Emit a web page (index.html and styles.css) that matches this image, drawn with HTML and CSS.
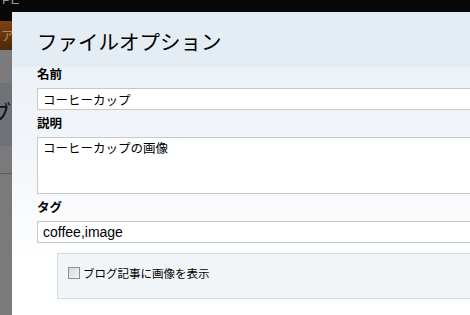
FILE: index.html
```html
<!DOCTYPE html>
<html lang="ja">
<head>
  <meta charset="UTF-8">
  <meta name="viewport" content="width=device-width, initial-scale=1.0">
  <title>ファイルオプション</title>
  <link rel="stylesheet" href="styles.css">
</head>
<body>
  <div class="page">
    <div class="topbar"><span class="logo">PE</span><span class="tweet">ツイート</span></div>
    <div class="nav"><span>ア</span></div>
    <div class="subnav"></div>
    <div class="page-title"><span>ブ</span></div>
    <div class="page-body"></div>
  </div>

  <div class="dialog">
    <div class="dialog-header">
      <h2>ファイルオプション</h2>
    </div>
    <form class="dialog-body">
      <div class="field">
        <label for="fileName">名前</label>
        <input type="text" id="fileName" class="jp" value="コーヒーカップ">
      </div>
      <div class="field">
        <label for="fileDesc">説明</label>
        <textarea id="fileDesc" class="jp">コーヒーカップの画像</textarea>
      </div>
      <div class="field">
        <label for="fileTags">タグ</label>
        <input type="text" id="fileTags" value="coffee,image">
      </div>
      <div class="option-box">
        <label class="check"><span class="box"></span>ブログ記事に画像を表示</label>
      </div>
    </form>
  </div>
</body>
</html>
```

FILE: styles.css
```css
body {
  margin: 0;
  width: 470px;
  height: 315px;
  overflow: hidden;
  position: relative;
  font-family: "Liberation Sans", "Noto Sans CJK JP", sans-serif;
  background-color: #7a7a7a;
}

/* page behind the dialog */
.topbar {
  height: 28px;
  background-color: #080808;
  position: relative;
}

.logo {
  display: block;
  color: #9a9a9a;
  font-size: 13px;
  line-height: 13px;
  margin-top: -7px;
  padding-left: 2px;
}

.tweet {
  position: absolute;
  right: 2px;
  top: -8px;
  color: #6a7a20;
  font-size: 11px;
}

.nav {
  height: 29px;
  background: linear-gradient(#7c4310, #4e2808);
  color: #b08a60;
  font-size: 13px;
  line-height: 29px;
  padding-left: 1px;
}

.subnav {
  height: 33px;
  background-color: #7b7b7b;
}

.page-title {
  height: 63px;
  background-color: #6d7377;
  font-size: 22px;
  line-height: 62px;
  color: #111;
  overflow: hidden;
}

.page-title span {
  margin-left: -11px;
}

.page-body {
  height: 27px;
  border-bottom: 1px solid #5a5a5a;
}

/* dialog */
.dialog {
  position: absolute;
  left: 12px;
  top: 12px;
  width: 500px;
  height: 320px;
  background: linear-gradient(#edf2f8 55px, #f3f6fa 150px, #ffffff 250px);
}

.dialog-header {
  height: 55px;
  background-color: #e4ecf4;
  padding-left: 25px;
  box-sizing: border-box;
}

.dialog-header h2 {
  margin: 0;
  padding-top: 18px;
  font-size: 20.5px;
  line-height: 25px;
  font-weight: normal;
  color: #000;
}

.dialog-body {
  padding: 1px 0 0 25px;
}

.field {
  margin-bottom: 7px;
}

.field label {
  display: block;
  font-size: 12.5px;
  font-weight: bold;
  line-height: 15px;
  margin-bottom: 5px;
  color: #000;
}

.field input,
.field textarea {
  display: block;
  width: 460px;
  box-sizing: border-box;
  border: 1px solid #c8c8c8;
  background-color: #fff;
  padding: 0 5px;
  margin: 0;
  font-family: "Liberation Sans", "Noto Sans CJK JP", sans-serif;
  font-size: 14px;
  color: #000;
  outline: none;
}

.field input {
  height: 22px;
}

.field textarea {
  height: 57px;
  padding-top: 3px;
  resize: none;
  line-height: 16px;
}

.field .jp {
  font-size: 12.5px;
}

.option-box {
  margin: 10px 0 0 20px;
  height: 46px;
  box-sizing: border-box;
  border: 1px solid #d0dde6;
  background-color: #f1f5f8;
  padding: 11px 0 0 10px;
}

.check {
  display: flex;
  align-items: center;
  font-size: 11.5px;
  color: #000;
}

.check .box {
  width: 10px;
  height: 10px;
  border: 1px solid #8e8f8f;
  background: linear-gradient(135deg, #d8d8d8, #f4f4f4);
  margin-right: 3px;
}
```
